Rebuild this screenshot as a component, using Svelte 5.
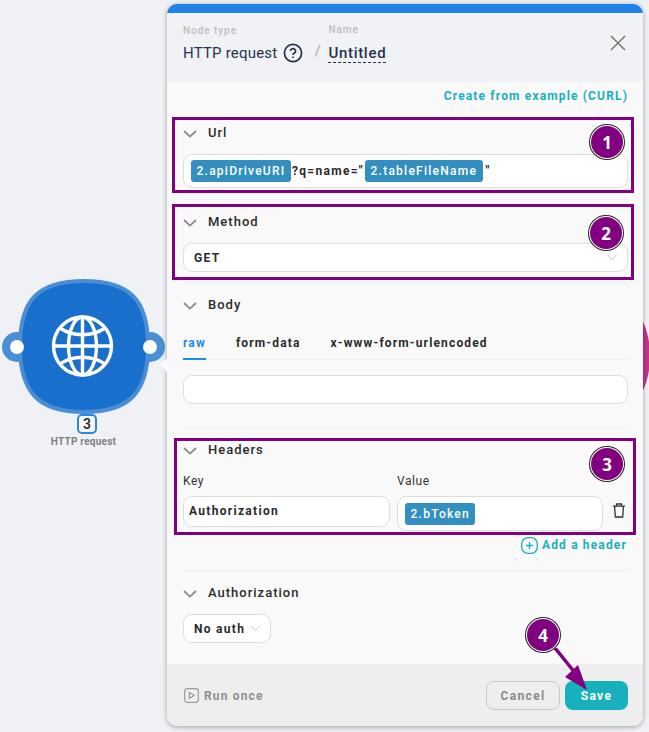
<script>
	const tabs = ["raw", "form-data", "x-www-form-urlencoded"];
	const frames = [
		{ id: "url", n: 1 },
		{ id: "method", n: 2 },
		{ id: "headers", n: 3 }
	];
</script>

{#snippet chevron()}
	<svg class="chevron" width="14" height="8" viewBox="0 0 14 8"><path d="M1 1l6 5.6L13 1" fill="none" stroke="#8a8a8a" stroke-width="1.8" /></svg>
{/snippet}

{#snippet caret()}
	<svg class="caret" width="10" height="7" viewBox="0 0 10 7"><path d="M.5 .8L5 6 9.500 .8" fill="none" stroke="#c4c4c4" stroke-width="1" /></svg>
{/snippet}

<div class="canvas">
	<div class="blob-behind"></div>

	<div class="node">
		<svg width="170" height="146" viewBox="0 0 170 146">
			<circle cx="17" cy="77" r="15" fill="#4a8fd6" />
			<circle cx="150" cy="77" r="15" fill="#4a8fd6" />
			<path
				d="M84 11C130 11 148 30 148 76C148 122 130 142 84 142C38 142 20 122 20 76C20 30 38 11 84 11Z"
				fill="#1870cc"
				stroke="#4a8fd6"
				stroke-width="4"
			/>
			<circle cx="17" cy="77" r="7" fill="#fff" />
			<circle cx="150" cy="77" r="7" fill="#fff" />
			<g fill="none" stroke="#fff" stroke-width="3.400">
				<circle cx="82.500" cy="76" r="29" />
				<ellipse cx="82.500" cy="76" rx="14" ry="29" />
				<path d="M82.500 47v58M53.500 76h58" />
				<path d="M60 58c13 9 32 9 45 0M60 94c13-9 32-9 45 0" />
			</g>
		</svg>
		<span class="node-num">3</span>
		<span class="node-label">HTTP request</span>
	</div>
	<div class="pointer"></div>

	<section class="panel">
		<header class="head">
			<div class="head-col type">
				<span class="over">Node type</span>
				<div class="head-value">
					HTTP request
					<svg width="20" height="20" viewBox="0 0 20 20" fill="none" stroke="#26324f" stroke-width="1.700">
						<circle cx="10" cy="10" r="8.600" />
						<path d="M7.400 8a2.600 2.400 0 1 1 3.900 2.100c-.9.500-1.300 1-1.300 2" />
						<path d="M10 13.400v1.600" />
					</svg>
				</div>
			</div>
			<span class="slash">/</span>
			<div class="head-col name">
				<span class="over">Name</span>
				<span class="untitled">Untitled</span>
			</div>
			<svg class="close" width="16" height="16" viewBox="0 0 16 16"><path d="M1 1l14 14M15 1L1 15" stroke="#777" stroke-width="1.500" /></svg>
		</header>

		<div class="body">
			<a class="link create">Create from example (CURL)</a>

			<div class="group first">
				<div class="title">{@render chevron()}Url</div>
				<div class="field url">
					<span class="tag">2.apiDriveURI</span><span class="plain">?q=name="</span><span class="tag">2.tableFileName</span><span class="plain quote">"</span>
				</div>
			</div>

			<div class="group method">
				<div class="title">{@render chevron()}Method</div>
				<div class="field select wide"><span>GET</span>{@render caret()}</div>
			</div>

			<div class="group body-group">
				<div class="title">{@render chevron()}Body</div>
				<div class="tabs">
					{#each tabs as tab, i}
						<span class="tab" class:active={i === 0}>{tab}</span>
					{/each}
				</div>
				<div class="field blank"></div>
			</div>

			<div class="group headers">
				<div class="title">{@render chevron()}Headers</div>
				<div class="pair">
					<div class="col">
						<span class="label">Key</span>
						<div class="field key">Authorization</div>
					</div>
					<div class="col">
						<span class="label">Value</span>
						<div class="field value"><span class="tag">2.bToken</span></div>
					</div>
					<svg class="trash" width="14" height="15" viewBox="0 0 14 15" fill="none" stroke="#333" stroke-width="1.300">
						<path d="M1 3.200h12M4.500 3V1h5v2M2.600 3.200l.7 10.800h7.400l.7-10.800" />
					</svg>
				</div>
				<div class="add">
					<svg width="17" height="17" viewBox="0 0 17 17" fill="none" stroke="#18b0bd" stroke-width="1.300">
						<rect x=".7" y=".7" width="15.600" height="15.600" rx="6" />
						<path d="M8.500 5v7M5 8.500h7" />
					</svg>
					<a class="link">Add a header</a>
				</div>
			</div>

			<div class="group auth">
				<div class="title">{@render chevron()}Authorization</div>
				<div class="field select small"><span>No auth</span>{@render caret()}</div>
			</div>
		</div>

		<footer class="foot">
			<svg width="15" height="15" viewBox="0 0 15 15" fill="none" stroke="#999" stroke-width="1.200">
				<rect x=".7" y=".7" width="13.600" height="13.600" rx="2.500" />
				<path d="M5.300 4.500v6l4.800-3z" />
			</svg>
			<span class="run">Run once</span>
			<button class="cancel">Cancel</button>
			<button class="save">Save</button>
		</footer>

		{#each frames as f}
			<div class="frame {f.id}-frame"></div>
			<span class="badge {f.id}-badge">{f.n}</span>
		{/each}
		<span class="badge save-badge">4</span>
		<svg class="arrow" width="44" height="48" viewBox="0 0 44 48">
			<path d="M1 0L22 26" stroke="#800080" stroke-width="3.500" />
			<path d="M33 42L11 29 24 17z" fill="#800080" />
		</svg>
	</section>
</div>

<style>
	:global(body) {
		margin: 0;
		background: #f0f1f5;
	}

	.canvas {
		position: relative;
		width: 649px;
		height: 732px;
		overflow: hidden;
		font-family: Roboto, sans-serif;
		color: #2b2b2b;
		padding: 4px 0 0 167px;
		box-sizing: border-box;
	}

	.blob-behind {
		position: absolute;
		left: 600px;
		top: 306px;
		width: 50px;
		height: 100px;
		border-radius: 50%;
		background: #c1358a;
	}

	.node {
		position: absolute;
		left: 0;
		top: 270px;
		width: 170px;
		height: 185px;
	}

	.node svg {
		display: block;
	}

	.node-num {
		position: absolute;
		left: 77px;
		top: 144px;
		width: 16px;
		height: 16px;
		border: 2px solid #2d87e0;
		border-radius: 5px;
		background: #f7f8fa;
		font-size: 14px;
		font-weight: 500;
		line-height: 16px;
		text-align: center;
		color: #222;
	}

	.node-label {
		position: absolute;
		left: 0;
		width: 167px;
		top: 166px;
		font-size: 10px;
		font-weight: 700;
		line-height: 12px;
		letter-spacing: 0.25px;
		text-align: center;
		color: #808080;
	}

	.pointer {
		position: absolute;
		z-index: 1;
		left: 160px;
		top: 358px;
		border-top: 7px solid transparent;
		border-bottom: 7px solid transparent;
		border-right: 7px solid #fbfbfb;
	}

	.panel {
		position: relative;
		width: 476px;
		height: 722px;
		display: flex;
		flex-direction: column;
		border-top: 9px solid #1e82e6;
		border-radius: 10px;
		background: #f9f9f9;
		box-sizing: border-box;
		box-shadow: 0 1px 5px rgba(0, 0, 0, 0.35);
	}

	.head {
		height: 69px;
		flex: none;
		display: flex;
		align-items: flex-start;
		padding-left: 16px;
		background: #f1f2f5;
		box-sizing: border-box;
	}

	.head-col {
		display: flex;
		flex-direction: column;
	}

	.type {
		padding-top: 12px;
	}

	.name {
		padding-top: 11px;
	}

	.over {
		font-size: 10px;
		font-weight: 500;
		line-height: 12px;
		letter-spacing: 0.95px;
		color: #bdbdbd;
	}

	.head-value,
	.untitled {
		display: flex;
		align-items: center;
		gap: 6px;
		margin-top: 6px;
		height: 20px;
		font-size: 15px;
		letter-spacing: 0.2px;
		color: #26324f;
	}

	.untitled {
		align-self: flex-start;
		margin-top: 7px;
		font-weight: 500;
		letter-spacing: 0.7px;
		border-bottom: 1px dashed #26324f;
		height: 19px;
	}

	.slash {
		margin: 29px 0 0 11px;
		width: 14px;
		font-size: 15px;
		color: #aaa;
	}

	.close {
		margin: 22px 0 0 auto;
		margin-right: 17px;
	}

	.body {
		flex: 1;
		min-height: 0;
		padding: 6px 15px 0 16px;
	}

	.link {
		font-size: 12px;
		font-weight: 700;
		line-height: 16px;
		letter-spacing: 1.15px;
		color: #18b0bd;
	}

	.create {
		display: block;
		text-align: right;
	}

	.group {
		padding-top: 13px;
		border-bottom: 1px solid #eeeeee;
	}

	.first {
		padding-top: 20px;
		padding-bottom: 11px;
	}

	.method {
		padding-bottom: 10px;
	}

	.body-group {
		padding-bottom: 23px;
	}

	.headers {
		padding-bottom: 17px;
	}

	.auth {
		border-bottom: none;
	}

	.title {
		display: flex;
		align-items: center;
		height: 16px;
		font-size: 13px;
		font-weight: 500;
		letter-spacing: 1px;
		color: #2b2b2b;
	}

	.chevron {
		margin-right: 11px;
		margin-top: 3px;
		flex: none;
	}

	.field {
		margin-top: 14px;
		display: flex;
		align-items: center;
		box-sizing: border-box;
		border: 1px solid #dedede;
		border-radius: 9px;
		background: #fff;
		font-size: 12px;
		font-weight: 700;
		letter-spacing: 1.3px;
		color: #2b2b2b;
		white-space: nowrap;
	}

	.url {
		height: 34px;
		padding-left: 7px;
	}

	.tag {
		height: 22px;
		padding: 0 5.500px;
		display: flex;
		align-items: center;
		border-radius: 3px;
		background: #338fbf;
		color: #fff;
		font-weight: 500;
		letter-spacing: 1.25px;
		white-space: nowrap;
	}

	.plain {
		padding: 0 1px;
		letter-spacing: 1.3px;
		font-weight: 700;
	}

	.quote {
		margin-left: 2px;
	}

	.select {
		height: 29px;
		justify-content: space-between;
		padding: 0 10px 0 10px;
	}

	.small {
		width: 88px;
		gap: 6px;
	}

	.tabs {
		display: flex;
		gap: 30px;
		margin-top: 23px;
		border-bottom: 1px solid #ededed;
	}

	.tab {
		position: relative;
		height: 24px;
		line-height: 16px;
		font-size: 12px;
		font-weight: 700;
		letter-spacing: 1.15px;
		color: #2b2b2b;
	}

	.active {
		color: #1e8af0;
		border-bottom: 2px solid #1e8af0;
		margin-bottom: -1px;
		height: 23px;
	}

	.blank {
		margin-top: 15px;
		height: 29px;
	}

	.pair {
		display: flex;
		align-items: flex-start;
		gap: 7px;
		margin-top: 16px;
	}

	.col {
		flex: none;
		display: flex;
		flex-direction: column;
		width: 207px;
	}

	.col:nth-child(2) {
		width: 206px;
	}

	.label {
		height: 16px;
		font-size: 12px;
		line-height: 16px;
		letter-spacing: 0.6px;
		color: #333;
	}

	.key {
		margin-top: 7px;
		height: 31px;
		padding: 0 5px 2px;
	}

	.value {
		margin-top: 7px;
		height: 35px;
		padding-left: 7px;
	}

	.trash {
		flex: none;
		margin: 30px 0 0 2px;
	}

	.add {
		display: flex;
		justify-content: flex-end;
		align-items: center;
		gap: 4px;
		margin-top: 6px;
		height: 16px;
		margin-right: 1px;
	}

	.foot {
		height: 62px;
		flex: none;
		display: flex;
		align-items: center;
		padding: 0 15px 0 17px;
		background: #eeeeee;
		border-radius: 0 0 10px 10px;
		box-sizing: border-box;
	}

	.run {
		margin-left: 5px;
		margin-right: auto;
		padding-top: 2px;
		font-size: 12px;
		font-weight: 700;
		letter-spacing: 1.15px;
		color: #909090;
	}

	button {
		height: 29px;
		border-radius: 8px;
		font-family: inherit;
		font-size: 12px;
		font-weight: 700;
		letter-spacing: 1.35px;
		padding: 2px 0 0;
		box-sizing: border-box;
	}

	.cancel {
		width: 74px;
		margin-right: 5px;
		border: 1px solid #c9c9c9;
		background: transparent;
		color: #8a8a8a;
	}

	.save {
		width: 63px;
		border: none;
		background: #18b0bd;
		color: #fff;
	}

	.frame {
		position: absolute;
		box-sizing: border-box;
		border: 3px solid #800080;
		pointer-events: none;
	}

	.url-frame {
		left: 5px;
		top: 104px;
		width: 462px;
		height: 76px;
	}

	.method-frame {
		left: 5px;
		top: 191px;
		width: 462px;
		height: 76px;
	}

	.headers-frame {
		left: 7px;
		top: 425px;
		width: 462px;
		height: 97px;
	}

	.badge {
		position: absolute;
		width: 32px;
		height: 32px;
		display: flex;
		align-items: center;
		justify-content: center;
		border-radius: 50%;
		background: #800080;
		color: #fff;
		font-family: "Open Sans", sans-serif;
		font-size: 17px;
		font-weight: 700;
		box-shadow: 0 0 0 1px #fff, 0 0 0 2px #222;
	}

	.url-badge {
		left: 424px;
		top: 113px;
	}

	.method-badge {
		left: 423px;
		top: 204px;
	}

	.headers-badge {
		left: 424px;
		top: 435px;
	}

	.save-badge {
		left: 360px;
		top: 606px;
	}

	.arrow {
		position: absolute;
		left: 387px;
		top: 635px;
	}
</style>
